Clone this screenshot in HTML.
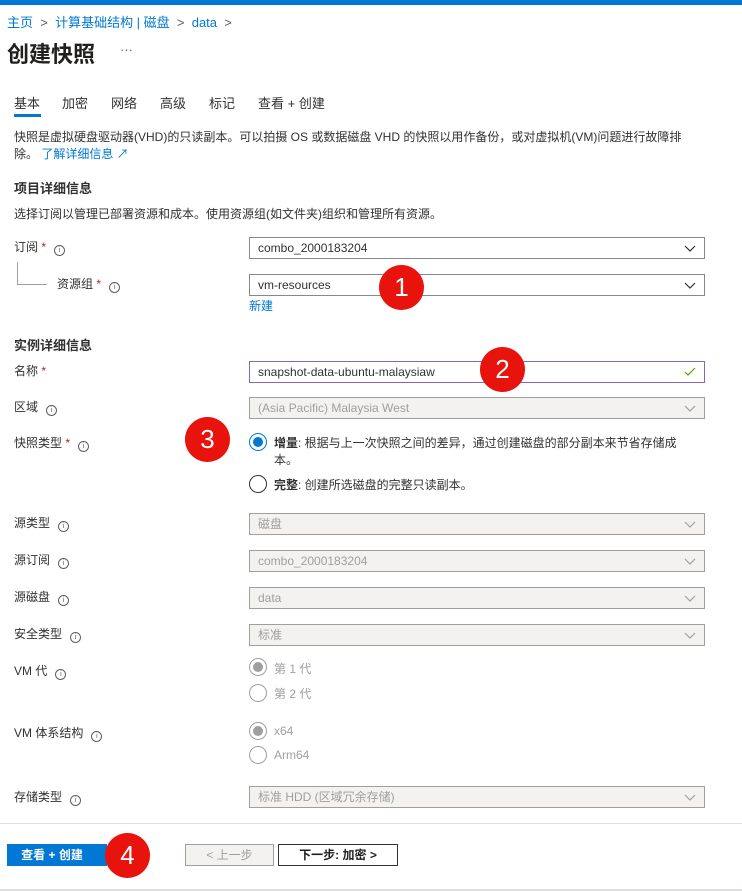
<!DOCTYPE html>
<html><head><meta charset="utf-8"><style>
*{box-sizing:border-box;margin:0;padding:0}
body{width:742px;height:891px;background:#fff;position:relative;overflow:hidden;font-family:"Liberation Sans","Noto Sans CJK SC",sans-serif;font-size:12px;color:#323130}
.a{position:absolute;white-space:nowrap}
.lbl{position:absolute;left:14px;font-size:12px;color:#323130}
.req{color:#a4262c}
.inf{display:inline-block;width:11px;height:11px;border:1px solid #605e5c;border-radius:50%;margin-left:8px;position:relative;top:1px;font-size:7px;line-height:9px;text-align:center;color:#605e5c}
.box{position:absolute;left:249px;width:456px;height:22px;border:1px solid #8a8886;background:#fff;padding-left:8px;line-height:20px;font-size:12px;color:#323130}
.box.d{background:#f3f2f1;border-color:#a19f9d;color:#a19f9d}
.chev{position:absolute;right:8px;top:5px;width:12px;height:10px}
.circ{position:absolute;width:45px;height:45px;border-radius:50%;background:#e8130d;color:#fff;font-size:26px;text-align:center;line-height:45px}
.rad{position:absolute;left:249px;width:18px;height:18px;border:1px solid #323130;border-radius:50%}
.rad.on{border-color:#0078d4}
.rad.on::after{content:"";position:absolute;left:3px;top:3px;width:10px;height:10px;border-radius:50%;background:#0078d4}
.rad.g{border-color:#a19f9d}
.rad.g.on::after{background:#a19f9d}
.rt{position:absolute;left:274px;font-size:12px}
</style></head><body>
<div class="a" style="left:0;top:0;width:742px;height:5px;background:#0078d4"></div>
<div class="a" style="left:7px;top:12px;font-size:13px;color:#0078d4">主页 <span style="color:#605e5c">&nbsp;&gt;&nbsp;</span> 计算基础结构 | 磁盘 <span style="color:#605e5c">&nbsp;&gt;&nbsp;</span> data <span style="color:#605e5c">&nbsp;&gt;</span></div>
<div class="a" style="left:7px;top:37px;font-size:22px;font-weight:bold;color:#201f1e">创建快照</div>
<div class="a" style="left:120px;top:42px;font-size:13px;color:#605e5c">···</div>
<div class="a" style="left:14px;top:93px;font-size:13px;color:#323130">基本</div>
<div class="a" style="left:62px;top:93px;font-size:13px">加密</div>
<div class="a" style="left:111px;top:93px;font-size:13px">网络</div>
<div class="a" style="left:160px;top:93px;font-size:13px">高级</div>
<div class="a" style="left:209px;top:93px;font-size:13px">标记</div>
<div class="a" style="left:258px;top:93px;font-size:13px">查看 + 创建</div>
<div class="a" style="left:14px;top:114px;width:27px;height:3px;background:#0078d4"></div>
<div class="a" style="left:14px;top:128px;font-size:12px">快照是虚拟硬盘驱动器(VHD)的只读副本。可以拍摄 OS 或数据磁盘 VHD 的快照以用作备份，或对虚拟机(VM)问题进行故障排</div>
<div class="a" style="left:14px;top:145px;font-size:12px">除。 <span style="color:#0078d4">了解详细信息 ↗</span></div>
<div class="a" style="left:14px;top:178px;font-size:13px;font-weight:bold">项目详细信息</div>
<div class="a" style="left:14px;top:205px;font-size:12px">选择订阅以管理已部署资源和成本。使用资源组(如文件夹)组织和管理所有资源。</div>

<div class="lbl" style="top:238px">订阅 <span class="req">*</span><span class="inf">i</span></div>
<div class="box" style="top:237px">combo_2000183204<svg class="chev" viewBox="0 0 12 10"><path d="M1 3l5 5 5-5" fill="none" stroke="#323130" stroke-width="1.2"/></svg></div>
<div class="a" style="left:17px;top:262px;width:1px;height:22px;background:#a19f9d"></div>
<div class="a" style="left:17px;top:284px;width:30px;height:1px;background:#a19f9d"></div>
<div class="lbl" style="left:57px;top:275px">资源组 <span class="req">*</span><span class="inf">i</span></div>
<div class="box" style="top:274px">vm-resources<svg class="chev" viewBox="0 0 12 10"><path d="M1 3l5 5 5-5" fill="none" stroke="#323130" stroke-width="1.2"/></svg></div>
<div class="a" style="left:249px;top:297px;color:#0078d4">新建</div>

<div class="a" style="left:14px;top:335px;font-size:13px;font-weight:bold">实例详细信息</div>
<div class="lbl" style="top:362px">名称 <span class="req">*</span></div>
<div class="box" style="top:361px;border-color:#8764b8">snapshot-data-ubuntu-malaysiaw<svg class="chev" viewBox="0 0 12 10"><path d="M1 5l3 3 7-7" fill="none" stroke="#57a300" stroke-width="1.2"/></svg></div>
<div class="lbl" style="top:398px">区域<span class="inf">i</span></div>
<div class="box d" style="top:397px">(Asia Pacific) Malaysia West<svg class="chev" viewBox="0 0 12 10"><path d="M1 3l5 5 5-5" fill="none" stroke="#a19f9d" stroke-width="1.2"/></svg></div>
<div class="lbl" style="top:434px">快照类型 <span class="req">*</span><span class="inf">i</span></div>
<div class="rad on" style="top:433px"></div>
<div class="rt" style="top:434px"><b>增量</b>: 根据与上一次快照之间的差异，通过创建磁盘的部分副本来节省存储成</div>
<div class="rt" style="top:451px">本。</div>
<div class="rad" style="top:475px"></div>
<div class="rt" style="top:476px"><b>完整</b>: 创建所选磁盘的完整只读副本。</div>

<div class="lbl" style="top:514px">源类型<span class="inf">i</span></div>
<div class="box d" style="top:513px">磁盘<svg class="chev" viewBox="0 0 12 10"><path d="M1 3l5 5 5-5" fill="none" stroke="#a19f9d" stroke-width="1.2"/></svg></div>
<div class="lbl" style="top:551px">源订阅<span class="inf">i</span></div>
<div class="box d" style="top:550px">combo_2000183204<svg class="chev" viewBox="0 0 12 10"><path d="M1 3l5 5 5-5" fill="none" stroke="#a19f9d" stroke-width="1.2"/></svg></div>
<div class="lbl" style="top:588px">源磁盘<span class="inf">i</span></div>
<div class="box d" style="top:587px">data<svg class="chev" viewBox="0 0 12 10"><path d="M1 3l5 5 5-5" fill="none" stroke="#a19f9d" stroke-width="1.2"/></svg></div>
<div class="lbl" style="top:625px">安全类型<span class="inf">i</span></div>
<div class="box d" style="top:624px">标准<svg class="chev" viewBox="0 0 12 10"><path d="M1 3l5 5 5-5" fill="none" stroke="#a19f9d" stroke-width="1.2"/></svg></div>

<div class="lbl" style="top:662px">VM 代<span class="inf">i</span></div>
<div class="rad g on" style="top:658px"></div>
<div class="rt" style="top:660px;color:#a19f9d">第 1 代</div>
<div class="rad g" style="top:684px"></div>
<div class="rt" style="top:685px;color:#a19f9d">第 2 代</div>
<div class="lbl" style="top:724px">VM 体系结构<span class="inf">i</span></div>
<div class="rad g on" style="top:722px"></div>
<div class="rt" style="top:724px;color:#a19f9d">x64</div>
<div class="rad g" style="top:746px"></div>
<div class="rt" style="top:748px;color:#a19f9d">Arm64</div>
<div class="lbl" style="top:788px">存储类型<span class="inf">i</span></div>
<div class="box d" style="top:786px">标准 HDD (区域冗余存储)<svg class="chev" viewBox="0 0 12 10"><path d="M1 3l5 5 5-5" fill="none" stroke="#a19f9d" stroke-width="1.2"/></svg></div>

<div class="a" style="left:0;top:823px;width:742px;height:1px;background:#e1dfdd"></div>
<div class="a" style="left:7px;top:844px;width:100px;height:22px;background:#0078d4;color:#fff;font-weight:bold;text-align:center;line-height:22px;padding-right:10px">查看 + 创建</div>
<div class="a" style="left:185px;top:844px;width:89px;height:22px;background:#f3f2f1;border:1px solid #a19f9d;color:#a19f9d;text-align:center;line-height:20px">&lt; 上一步</div>
<div class="a" style="left:278px;top:844px;width:120px;height:22px;border:1px solid #323130;text-align:center;line-height:20px;font-weight:bold;color:#201f1e">下一步: 加密 &gt;</div>
<div class="a" style="left:0;top:889px;width:742px;height:2px;background:#e1dfdd"></div>

<div class="circ" style="left:379px;top:265px">1</div>
<div class="circ" style="left:480px;top:347px">2</div>
<div class="circ" style="left:185px;top:417px">3</div>
<div class="circ" style="left:105px;top:833px">4</div>
</body></html>
